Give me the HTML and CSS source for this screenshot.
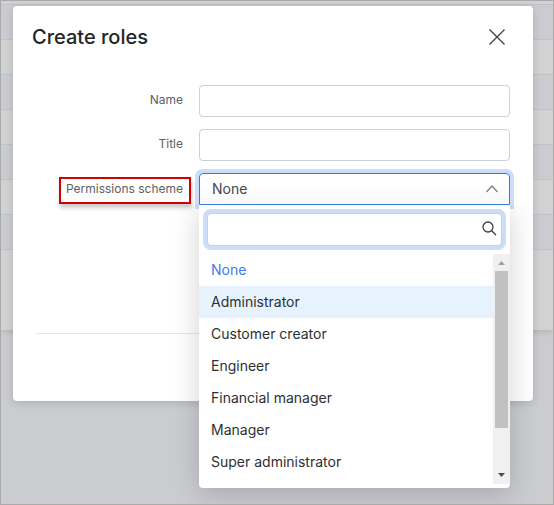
FILE: index.html
```html
<!DOCTYPE html>
<html lang="en">
<head>
<meta charset="utf-8">
<title>Create roles</title>
<link rel="stylesheet" href="styles.css">
</head>
<body>
<div class="backdrop" aria-hidden="true">
  <div class="row row-first"></div>
  <div class="row"></div>
  <div class="row"></div>
  <div class="row"></div>
  <div class="row"></div>
  <div class="row"></div>
  <div class="row"></div>
  <div class="row"></div>
  <div class="row row-last"></div>
</div>
<main class="dialog" role="dialog" aria-labelledby="title">
  <header class="head">
    <h1 id="title">Create roles</h1>
    <button class="close" type="button" aria-label="Close">
      <svg width="16" height="16" viewBox="0 0 16 16"><path d="M.5 .5l15 15M15.5 .5l-15 15"/></svg>
    </button>
  </header>
  <form class="form">
    <div class="field">
      <div class="caption"><label for="name">Name</label></div>
      <input class="control" id="name" type="text">
    </div>
    <div class="field">
      <div class="caption"><label for="role-title">Title</label></div>
      <input class="control" id="role-title" type="text">
    </div>
    <div class="field">
      <div class="caption"><label class="marked" for="scheme">Permissions scheme</label></div>
      <div class="picker">
        <select class="control open" id="scheme">
          <option>None</option>
          <option>Administrator</option>
          <option>Customer creator</option>
          <option>Engineer</option>
          <option>Financial manager</option>
          <option>Manager</option>
          <option>Super administrator</option>
        </select>
        <svg class="chevron" width="12" height="8" viewBox="0 0 12 8"><path d="M.5 7L6 1l5.500 6"/></svg>
        <div class="menu">
          <div class="search">
            <input type="text" aria-label="Search">
            <svg class="lens" width="15" height="15" viewBox="0 0 15 15"><circle cx="6" cy="6" r="5"/><path d="M9.700 9.700l4.300 4.300"/></svg>
          </div>
          <div class="list">
            <ul role="listbox" aria-label="Permissions scheme">
              <li class="selected" role="option" aria-selected="true">None</li>
              <li class="active" role="option">Administrator</li>
              <li role="option">Customer creator</li>
              <li role="option">Engineer</li>
              <li role="option">Financial manager</li>
              <li role="option">Manager</li>
              <li role="option">Super administrator</li>
            </ul>
            <div class="scrollbar" aria-hidden="true">
              <svg class="arrow up" width="17" height="17" viewBox="0 0 17 17"><path d="M5 11L8.500 7l3.500 4z"/></svg>
              <div class="thumb"></div>
              <svg class="arrow" width="17" height="17" viewBox="0 0 17 17"><path d="M5 6h7l-3.500 4z"/></svg>
            </div>
          </div>
        </div>
      </div>
    </div>
  </form>
  <footer class="foot"></footer>
</main>
</body>
</html>
```
FILE: styles.css
```css
* { box-sizing: border-box; }

html { height: 100%; }

body {
  position: relative;
  min-height: 100%;
  margin: 0;
  padding: 5px 20px 16px 12px;
  border: 1px solid #aaa;
  background: #cbccd0;
  color: #212529;
  font: 14px/20px Inter, sans-serif;
  overflow: hidden;
}

.backdrop {
  position: absolute;
  inset: 0 0 auto;
  box-shadow: 0 2px 6px rgba(0, 0, 0, .12);
}

.row {
  height: 35px;
  border-bottom: 1px solid #c0c2c9;
  background: #cbccd1;
}

.row:nth-child(odd) { background: #d1d3d2; }
.row-first { height: 4px; }
.row-last { height: 80px; border: 0; }

.dialog {
  position: relative;
  padding: 0 23px;
  border-radius: 4px;
  background: #fff;
  box-shadow: 0 2px 8px rgba(0, 0, 0, .15);
}

.head {
  display: flex;
  align-items: center;
  justify-content: space-between;
  height: 62px;
}

h1 {
  margin: 0 -4px;
  font-size: 20px;
  font-weight: 550;
  line-height: 28px;
}

.close {
  display: flex;
  width: 26px;
  height: 26px;
  align-items: center;
  justify-content: center;
  padding: 0;
  border: 0;
  background: none;
}

svg { fill: none; stroke: #3b4044; stroke-width: 1.3; }

.form {
  display: grid;
  gap: 12px;
  padding-top: 17px;
}

.field {
  display: grid;
  grid-template-columns: 163px 1fr;
}

.caption {
  display: flex;
  align-items: flex-start;
  justify-content: flex-end;
  padding: 5px 16px 0 0;
  color: #5c6065;
  font-size: 12px;
}

.marked {
  margin: -1px -8px 0 0;
  padding: 0 6px 3px 5px;
  border: 2px solid #d40000;
  line-height: 20px;
  box-shadow: 1px 4px 4px rgba(0, 0, 0, .2);
}

.control {
  display: block;
  width: 100%;
  height: 32px;
  padding: 0 12px;
  border: 1px solid #ccd0d8;
  border-radius: 4px;
  background: #fff;
  color: #42474c;
  font: inherit;
  appearance: none;
  outline: 0;
}

.picker { position: relative; }

.open {
  border-color: #3579dc;
  border-radius: 4px 4px 0 0;
  background: linear-gradient(#fff 40%, #f9f9f9);
  box-shadow: 0 0 0 4px #cddcf9;
}

.chevron {
  position: absolute;
  top: 12px;
  right: 12px;
  stroke: #7b8085;
}

.menu {
  position: absolute;
  top: 100%;
  left: 0;
  right: 0;
  padding: 8px 0 4px;
  border-radius: 0 0 4px 4px;
  background: #fff;
  box-shadow: 0 6px 28px rgba(0, 0, 0, .18);
  clip-path: inset(0 -40px -40px);
}

.search {
  position: relative;
  margin: 0 8px 8px;
}

.search input {
  display: block;
  width: 100%;
  height: 33px;
  padding: 0 30px 0 8px;
  border: 1px solid #ccd0d8;
  border-radius: 4px;
  box-shadow: 0 0 0 4px #cddcf9;
  font: inherit;
  outline: 0;
}

.lens {
  position: absolute;
  top: 8px;
  right: 5px;
}

.list {
  display: flex;
  height: 230px;
  overflow: hidden;
}

ul {
  flex: 1;
  margin: 0;
  padding: 0;
  list-style: none;
}

li {
  padding: 6px 12px;
  color: #2c3034;
}

.selected { color: #3b7ded; }
.active { background: #e6f2fe; }

.scrollbar {
  display: flex;
  flex-direction: column;
  justify-content: space-between;
  width: 17px;
  background: #f0f0f0;
}

.arrow { flex: none; fill: #4c4c4c; stroke: none; }
.up { fill: #a0a0a0; }

.thumb {
  height: 157px;
  margin: 0 2px auto;
  background: #c1c1c1;
}

.foot {
  height: 68px;
  margin-top: 128px;
  border-top: 1px solid #e6e7e8;
}
```
